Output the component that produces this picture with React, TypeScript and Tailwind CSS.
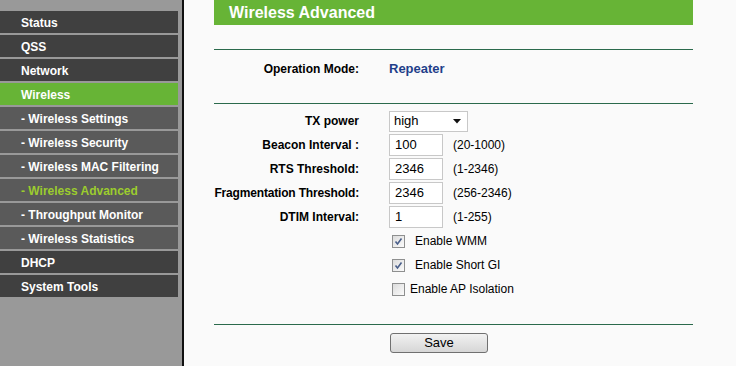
import React from "react";

const mainItem = "h-[22px] flex items-center pl-[21px] pt-[1px] font-bold text-[12px] whitespace-nowrap";

function Check({ checked }: { checked: boolean }) {
  return (
    <span className="w-[13px] h-[13px] border border-[#8e8f8f] bg-gradient-to-br from-[#dcdcdc] to-[#fbfbfb] flex items-center justify-center">
      {checked && (
        <svg width="9" height="9" viewBox="0 0 9 9">
          <path d="M1.5 4.5 L3.5 7 L7.5 1.5" stroke="#4a5f8a" strokeWidth="1.6" fill="none" />
        </svg>
      )}
    </span>
  );
}

function Label({ children, tight }: { children: React.ReactNode; tight?: boolean }) {
  return (
    <div className={"w-[145px] flex justify-end whitespace-nowrap font-bold text-[12px]" + (tight ? " tracking-[-0.17px]" : "")}>
      {children}
    </div>
  );
}

function Row({ label, value, hint, tight }: { label: string; value: string; hint: string; tight?: boolean }) {
  return (
    <div className="h-[24px] flex items-center">
      <Label tight={tight}>{label}</Label>
      <div className="ml-[30px] w-[54px] h-[22px] bg-white border border-[#c8c8c8] text-[13px] pl-[5px] flex items-center">{value}</div>
      <div className="ml-[10px] text-[12px]">{hint}</div>
    </div>
  );
}

export default function App() {
  const items: { t: string; kind: "main" | "sub" | "green" | "active" }[] = [
    { t: "Status", kind: "main" },
    { t: "QSS", kind: "main" },
    { t: "Network", kind: "main" },
    { t: "Wireless", kind: "green" },
    { t: "- Wireless Settings", kind: "sub" },
    { t: "- Wireless Security", kind: "sub" },
    { t: "- Wireless MAC Filtering", kind: "sub" },
    { t: "- Wireless Advanced", kind: "active" },
    { t: "- Throughput Monitor", kind: "sub" },
    { t: "- Wireless Statistics", kind: "sub" },
    { t: "DHCP", kind: "main" },
    { t: "System Tools", kind: "main" },
  ];
  return (
    <div className="w-[736px] h-[366px] flex overflow-hidden text-black" style={{ fontFamily: '"Liberation Sans", Arial, sans-serif' }}>
      <div className="w-[182px] h-full bg-[#999999] pt-[11px] flex flex-col gap-[2px]">
        {items.map((it) => (
          <div
            key={it.t}
            className={
              mainItem +
              " w-[178px] " +
              (it.kind === "main"
                ? "bg-[#404040] text-white"
                : it.kind === "green"
                ? "bg-[#67b436] text-white"
                : it.kind === "active"
                ? "bg-[#5a5a5a] text-[#9ccc2e]"
                : "bg-[#5a5a5a] text-white")
            }
          >
            {it.t}
          </div>
        ))}
      </div>
      <div className="w-[2px] h-full bg-[#111111]" />
      <div className="flex-1 h-full bg-[#fafafa] pl-[30px]">
        <div className="w-[479px] flex flex-col">
          <div className="h-[25px] bg-[#67b436] text-white font-bold text-[16px] pl-[15px] flex items-center">Wireless Advanced</div>
          <div className="mt-[24px] h-[1px] bg-[#2b6a4c]" />
          <div className="h-[38px] flex items-center">
            <Label>Operation Mode:</Label>
            <div className="ml-[30px] font-bold text-[13px] text-[#1f3f8a]">Repeater</div>
          </div>
          <div className="mt-[15px] h-[1px] bg-[#2b6a4c]" />
          <div className="mt-[5px] flex flex-col">
            <div className="h-[24px] flex items-center">
              <Label>TX power</Label>
              <div className="ml-[30px] w-[79px] h-[21px] bg-white border border-[#c8c8c8] text-[13px] pl-[4px] pr-[6px] flex items-center justify-between">
                <span>high</span>
                <svg width="8" height="5" viewBox="0 0 8 5"><path d="M0 0 H8 L4 4.5 Z" fill="#111" /></svg>
              </div>
            </div>
            <Row label="Beacon Interval :" value="100" hint="(20-1000)" />
            <Row label="RTS Threshold:" value="2346" hint="(1-2346)" />
            <Row label="Fragmentation Threshold:" value="2346" hint="(256-2346)" tight />
            <Row label="DTIM Interval:" value="1" hint="(1-255)" />
            <div className="h-[24px] flex items-center pl-[178px] text-[12px]">
              <Check checked />
              <span className="ml-[10px]">Enable WMM</span>
            </div>
            <div className="h-[24px] flex items-center pl-[178px] text-[12px]">
              <Check checked />
              <span className="ml-[10px]">Enable Short GI</span>
            </div>
            <div className="h-[24px] flex items-center pl-[178px] text-[12px]">
              <Check checked={false} />
              <span className="ml-[5px]">Enable AP Isolation</span>
            </div>
          </div>
          <div className="mt-[23px] h-[1px] bg-[#2b6a4c]" />
          <div className="mt-[8px] pl-[176px]">
            <div className="w-[98px] h-[20px] rounded-[3px] border border-[#707070] bg-gradient-to-b from-[#f2f2f2] to-[#d6d6d6] text-[13px] flex items-center justify-center">Save</div>
          </div>
        </div>
      </div>
    </div>
  );
}
